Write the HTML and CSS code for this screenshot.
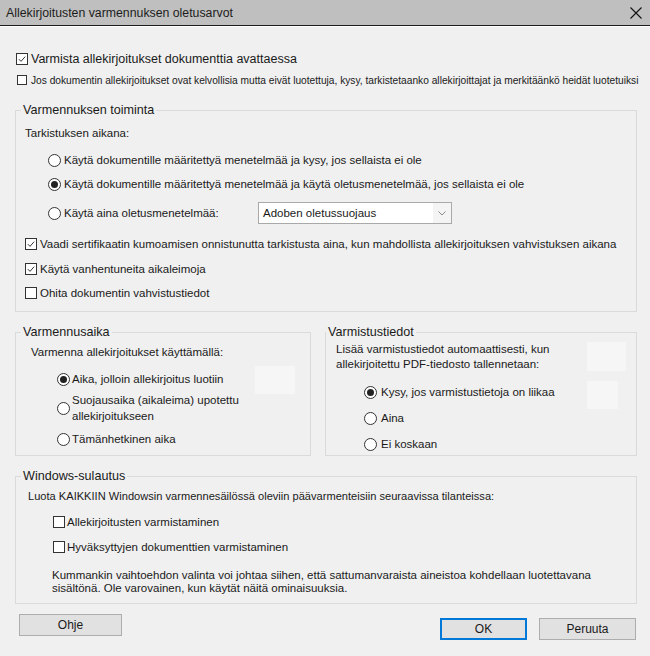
FILE: index.html
```html
<!DOCTYPE html>
<html lang="fi">
<head>
    <meta charset="UTF-8">
    <meta name="viewport" content="width=device-width, initial-scale=1.0">
    <title>Allekirjoitusten varmennuksen oletusarvot</title>
    <link rel="stylesheet" href="styles.css">
</head>
<body>
    <div class="titlebar">
        <span class="title">Allekirjoitusten varmennuksen oletusarvot</span>
        <svg class="close" width="12" height="12" viewBox="0 0 12 12"><path d="M0.5 0.5 L11.5 11.5 M11.5 0.5 L0.5 11.5" stroke="#111" stroke-width="1.1" fill="none"/></svg>
    </div>

    <div class="dialog">
        <label class="row top-check">
            <span class="check on"><svg viewBox="0 0 12 12"><polyline points="2.2,6.2 4.8,8.8 9.8,3.2" fill="none" stroke="#222" stroke-width="1.1"/></svg></span>
            <span>Varmista allekirjoitukset dokumenttia avattaessa</span>
        </label>
        <label class="row small-check">
            <span class="check tiny"></span>
            <span>Jos dokumentin allekirjoitukset ovat kelvollisia mutta eivät luotettuja, kysy, tarkistetaanko allekirjoittajat ja merkitäänkö heidät luotetuiksi</span>
        </label>

        <fieldset class="group group-action">
            <legend>Varmennuksen toiminta</legend>
            <div class="line">Tarkistuksen aikana:</div>
            <label class="row radio-row r1">
                <span class="radio"></span>
                <span>Käytä dokumentille määritettyä menetelmää ja kysy, jos sellaista ei ole</span>
            </label>
            <label class="row radio-row r2">
                <span class="radio on"></span>
                <span>Käytä dokumentille määritettyä menetelmää ja käytä oletusmenetelmää, jos sellaista ei ole</span>
            </label>
            <div class="row radio-row r3">
                <span class="radio"></span>
                <span class="method-label">Käytä aina oletusmenetelmää:</span>
                <div class="select">
                    <span>Adoben oletussuojaus</span>
                    <span class="arrow"><svg width="8" height="5" viewBox="0 0 8 5"><polyline points="0.5,0.5 4,4 7.5,0.5" fill="none" stroke="#8a8a8a" stroke-width="1"/></svg></span>
                </div>
            </div>
            <label class="row opt c1">
                <span class="check on"><svg viewBox="0 0 12 12"><polyline points="2.2,6.2 4.8,8.8 9.8,3.2" fill="none" stroke="#222" stroke-width="1.1"/></svg></span>
                <span>Vaadi sertifikaatin kumoamisen onnistunutta tarkistusta aina, kun mahdollista allekirjoituksen vahvistuksen aikana</span>
            </label>
            <label class="row opt c2">
                <span class="check on"><svg viewBox="0 0 12 12"><polyline points="2.2,6.2 4.8,8.8 9.8,3.2" fill="none" stroke="#222" stroke-width="1.1"/></svg></span>
                <span>Käytä vanhentuneita aikaleimoja</span>
            </label>
            <label class="row opt c3">
                <span class="check"></span>
                <span>Ohita dokumentin vahvistustiedot</span>
            </label>
        </fieldset>

        <div class="pair">
            <fieldset class="group group-time">
                <legend>Varmennusaika</legend>
                <div class="line">Varmenna allekirjoitukset käyttämällä:</div>
                <label class="row radio-row t1">
                    <span class="radio on"></span>
                    <span>Aika, jolloin allekirjoitus luotiin</span>
                </label>
                <label class="row radio-row t2">
                    <span class="radio"></span>
                    <span>Suojausaika (aikaleima) upotettu<br>allekirjoitukseen</span>
                </label>
                <label class="row radio-row t3">
                    <span class="radio"></span>
                    <span>Tämänhetkinen aika</span>
                </label>
                <span class="patch p1"></span>
            </fieldset>

            <fieldset class="group group-info">
                <legend>Varmistustiedot</legend>
                <div class="line two">Lisää varmistustiedot automaattisesti, kun<br>allekirjoitettu PDF-tiedosto tallennetaan:</div>
                <label class="row radio-row i1">
                    <span class="radio on"></span>
                    <span>Kysy, jos varmistustietoja on liikaa</span>
                </label>
                <label class="row radio-row i2">
                    <span class="radio"></span>
                    <span>Aina</span>
                </label>
                <label class="row radio-row i3">
                    <span class="radio"></span>
                    <span>Ei koskaan</span>
                </label>
                <span class="patch p2"></span>
                <span class="patch p3"></span>
            </fieldset>
        </div>

        <fieldset class="group group-win">
            <legend>Windows-sulautus</legend>
            <div class="line trust">Luota KAIKKIIN Windowsin varmennesäilössä oleviin päävarmenteisiin seuraavissa tilanteissa:</div>
            <label class="row opt w1">
                <span class="check"></span>
                <span>Allekirjoitusten varmistaminen</span>
            </label>
            <label class="row opt w2">
                <span class="check"></span>
                <span>Hyväksyttyjen dokumenttien varmistaminen</span>
            </label>
            <p class="warn">Kummankin vaihtoehdon valinta voi johtaa siihen, että sattumanvaraista aineistoa kohdellaan luotettavana<br>sisältönä. Ole varovainen, kun käytät näitä ominaisuuksia.</p>
        </fieldset>

        <div class="buttons">
            <button class="btn help">Ohje</button>
            <div class="spacer"></div>
            <button class="btn ok">OK</button>
            <button class="btn cancel">Peruuta</button>
        </div>
    </div>
</body>
</html>
```

FILE: styles.css
```css
* {
    box-sizing: border-box;
}

body {
    margin: 0;
    width: 650px;
    height: 656px;
    overflow: hidden;
    background: #f0f0f0;
    font-family: 'Liberation Sans', Arial, sans-serif;
    font-size: 11.5px;
    color: #1a1a1a;
}

.titlebar {
    height: 26px;
    background: #bfbfbf;
    border-bottom: 1px solid #1c1c1c;
    box-shadow: 0 1px 0 #ffffff;
    display: flex;
    align-items: center;
    padding: 0 8px 0 6px;
}

.title {
    font-size: 12.3px;
    color: #1c1c1c;
    flex: 1;
}

.dialog {
    padding: 0 13px 0 15px;
}

.row {
    display: flex;
    align-items: center;
    white-space: nowrap;
}

.check {
    width: 12px;
    height: 12px;
    border: 1px solid #333;
    background: #fff;
    flex: none;
    display: inline-flex;
}

.check svg {
    width: 10px;
    height: 10px;
}

.check.tiny {
    width: 10px;
    height: 10px;
}

.radio {
    width: 13px;
    height: 13px;
    border: 1px solid #333;
    border-radius: 50%;
    background: #fff;
    flex: none;
    display: inline-flex;
    align-items: center;
    justify-content: center;
}

.radio.on::after {
    content: "";
    width: 7px;
    height: 7px;
    border-radius: 50%;
    background: #222;
}

.top-check {
    margin-top: 24px;
    height: 18px;
    padding-left: 1px;
    font-size: 12.5px;
    gap: 3px;
}

.small-check {
    margin-top: 5px;
    height: 14px;
    padding-left: 2px;
    font-size: 10.2px;
    gap: 4px;
}

.group {
    margin: 0;
    border: 1px solid #dadada;
    padding: 0;
    min-width: 0;
}

.group legend {
    font-size: 12.6px;
    line-height: 15px;
    padding: 0 2px;
}

.line {
    line-height: 18px;
}

.group-action {
    margin-top: 16px;
    padding: 6px 8px 8px 9px;
}

.group-action legend {
    margin-left: -4px;
}

.radio-row {
    height: 20px;
    padding-left: 23px;
    gap: 3px;
}

.r1 { margin-top: 8px; }
.r2 { margin-top: 4px; }
.r3 { margin-top: 8px; height: 22px; }

.method-label {
    width: 191px;
}

.select {
    width: 194px;
    height: 22px;
    background: #fff;
    border: 1px solid #a9a9a9;
    display: flex;
    align-items: center;
    padding-left: 4px;
}

.select span:first-child {
    flex: 1;
}

.arrow {
    width: 18px;
    height: 20px;
    background: #f4f4f4;
    display: flex;
    align-items: center;
    justify-content: center;
}

.opt {
    height: 20px;
    gap: 3px;
}

.c1 { margin-top: 10px; }
.c2 { margin-top: 5px; }
.c3 { margin-top: 4px; }

.pair {
    display: flex;
    gap: 14px;
    margin-top: 13px;
}

.group-time {
    width: 296px;
    padding: 3px 8px 6px 15px;
    position: relative;
}

.group-time legend {
    margin-left: -10px;
}

.group-info {
    flex: 1;
    padding: 2px 8px 1px 10px;
    position: relative;
}

.group-info legend {
    margin-left: -10px;
}

.group-time .radio-row {
    padding-left: 26px;
    gap: 2px;
}

.t1 { margin-top: 8px; }
.t2 { margin-top: 3px; height: 32px; line-height: 16px; }
.t3 { margin-top: 5px; }

.line.two {
    line-height: 15px;
}

.group-info .radio-row {
    padding-left: 28px;
    gap: 4px;
}

.i1 { margin-top: 10px; }
.i2 { margin-top: 6px; }
.i3 { margin-top: 6px; }

.patch {
    position: absolute;
    background: #f6f6f6;
}

.p1 { left: 239px; top: 26px; width: 40px; height: 28px; }
.p2 { left: 261px; top: 2px; width: 39px; height: 29px; }
.p3 { left: 261px; top: 41px; width: 31px; height: 28px; }

.group-win {
    margin-top: 13px;
    padding: 3px 8px 7px 12px;
}

.group-win legend {
    margin-left: -7px;
}

.line.trust {
    font-size: 11.1px;
}

.group-win .opt {
    padding-left: 25px;
    gap: 2px;
}

.w1 { margin-top: 7px; }
.w2 { margin-top: 5px; }

.warn {
    margin: 12px 0 0 24px;
    line-height: 13.3px;
    white-space: nowrap;
}

.buttons {
    display: flex;
    align-items: flex-start;
    margin-top: 10px;
    padding: 0 1px 0 4px;
}

.spacer {
    flex: 1;
}

.btn {
    font-family: 'Liberation Sans', Arial, sans-serif;
    font-size: 12px;
    color: #1a1a1a;
    background: #e1e1e1;
    border: 1px solid #adadad;
    padding: 0;
}

.help {
    width: 103px;
    height: 22px;
}

.ok {
    width: 87px;
    height: 22px;
    margin-top: 4px;
    border: 2px solid #0078d7;
}

.cancel {
    width: 97px;
    height: 22px;
    margin-top: 4px;
    margin-left: 12px;
}
```
